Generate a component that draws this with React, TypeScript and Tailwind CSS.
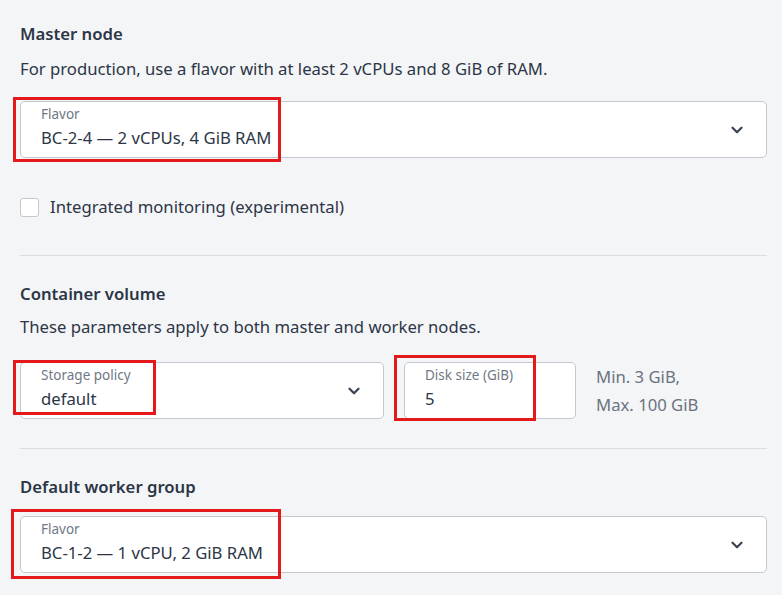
import { ChevronDown } from "lucide-react";

type SelectProps = {
  label: string;
  value: string;
  className?: string;
};

function FieldText({ label, value }: { label: string; value: string }) {
  return (
    <div className="flex flex-col self-stretch pt-[3px]">
      <span className="text-[13.5px] leading-[18px] text-[#707886]">{label}</span>
      <span className="mt-[2px] text-[16.7px] leading-[25px] text-[#2c3646]">{value}</span>
    </div>
  );
}

function SelectField({ label, value, className = "" }: SelectProps) {
  return (
    <div
      className={`flex h-[57px] items-center justify-between rounded-[5px] border border-[#c5c9cf] bg-white pl-5 pr-5 ${className}`}
    >
      <FieldText label={label} value={value} />
      <ChevronDown className="h-[18px] w-[18px] text-[#3a4452]" strokeWidth={3} />
    </div>
  );
}

// red highlight frame drawn over a field
function Mark({ className }: { className: string }) {
  return <div className={`pointer-events-none absolute border-[3px] border-[#e3191c] ${className}`} />;
}

export default function App() {
  return (
    <div
      className="relative min-h-[595px] w-[782px] bg-[#f4f5f7] px-5 pt-[21px] text-[#2c3646]"
      style={{ fontFamily: '"Noto Sans", "Open Sans", sans-serif' }}
    >
      <section className="pb-[24px]">
        <h2 className="text-[16.7px] font-semibold leading-[26px]">Master node</h2>
        <p className="mt-[10px] text-[16.7px] leading-[24px]">
          For production, use a flavor with at least 2 vCPUs and 8 GiB of RAM.
        </p>
        <SelectField className="mt-[20px] w-[747px]" label="Flavor" value="BC-2-4 — 2 vCPUs, 4 GiB RAM" />
        <label className="mt-[37px] flex items-center gap-[11px]">
          <span className="h-[19px] w-[19px] rounded-[3px] border border-[#c5c9cf] bg-white" />
          <span className="text-[16.7px] leading-[24px]">Integrated monitoring (experimental)</span>
        </label>
      </section>

      <div className="mt-[12px] h-px w-[747px] bg-[#d9dce1]" />

      <section className="pt-[25px]">
        <h2 className="text-[16.7px] font-semibold leading-[26px]">Container volume</h2>
        <p className="mt-[8px] text-[16.7px] leading-[24px]">
          These parameters apply to both master and worker nodes.
        </p>
        <div className="mt-[23px] flex items-center">
          <SelectField className="w-[364px]" label="Storage policy" value="default" />
          <div className="ml-[20px] flex h-[57px] w-[172px] rounded-[5px] border border-[#c5c9cf] bg-white pl-5">
            <FieldText label="Disk size (GiB)" value="5" />
          </div>
          <div className="ml-[20px] flex flex-col text-[16.7px] leading-[28px] text-[#6b7380]">
            <span>Min. 3 GiB,</span>
            <span>Max. 100 GiB</span>
          </div>
        </div>
      </section>

      <div className="mt-[29px] h-px w-[747px] bg-[#d9dce1]" />

      <section className="pt-[25px]">
        <h2 className="text-[16.7px] font-semibold leading-[26px]">Default worker group</h2>
        <SelectField className="mt-[16px] w-[747px]" label="Flavor" value="BC-1-2 — 1 vCPU, 2 GiB RAM" />
      </section>

      <Mark className="left-[13px] top-[97px] h-[65px] w-[268px]" />
      <Mark className="left-[13px] top-[360px] h-[55px] w-[143px]" />
      <Mark className="left-[394px] top-[355px] h-[66px] w-[142px]" />
      <Mark className="left-[11px] top-[509px] h-[70px] w-[270px]" />
    </div>
  );
}
